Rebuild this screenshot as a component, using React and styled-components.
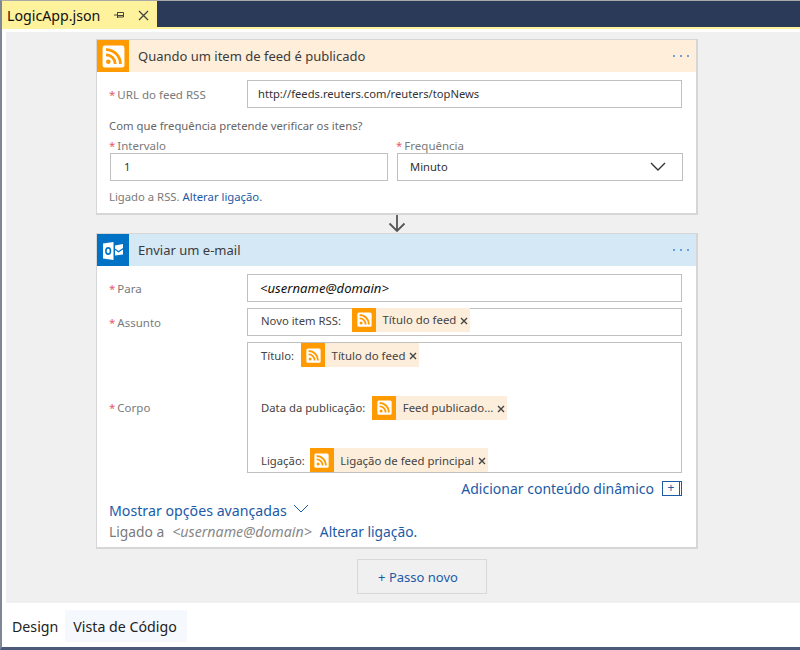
import styled, { createGlobalStyle } from "styled-components";

const Global = createGlobalStyle`
  html, body { margin: 0; padding: 0; background: #fff; }
  body { font-family: "Noto Sans", "Open Sans", sans-serif; color: #333; }
`;

const Frame = styled.div`
  width: 800px;
  height: 650px;
  box-sizing: border-box;
  display: flex;
  flex-direction: column;
  border-top: 1px solid #a9a9a9;
  border-left: 2px solid #7d8796;
  border-bottom: 3px solid #4a5a78;
  overflow: hidden;
`;

const TabBar = styled.div`
  height: 26px;
  flex: none;
  background: #2a3a58;
  display: flex;
`;

const FileTab = styled.div`
  width: 155px;
  background: #fff29d;
  display: flex;
  align-items: center;
  padding: 2px 0 0 5px;
  box-sizing: border-box;
  font-size: 14.2px;
  color: #111;
`;

const TabIcons = styled.div`
  display: flex;
  align-items: center;
  gap: 13px;
  margin-left: 14px;
`;

const YellowLine = styled.div`
  height: 2px;
  flex: none;
  background: #fff29d;
`;

const Canvas = styled.div`
  flex: none;
  height: 571px;
  margin: 3px 0 0 4px;
  box-sizing: border-box;
  background: #f0f0f0;
  padding: 7px 0 0 90px;
`;

const Card = styled.section`
  width: 602px;
  box-sizing: border-box;
  background: #fff;
  border: 1px solid #d6d6d6;
  border-right-width: 2px;
  border-bottom-width: 2px;
  height: ${(p) => p.$height}px;
`;

const CardHeader = styled.header`
  height: 32px;
  background: ${(p) => p.$bg};
  display: flex;
  align-items: center;
  font-size: 13px;
  color: #3b3b3b;
`;

const HeaderIcon = styled.div`
  width: 32px;
  height: 32px;
  flex: none;
  display: flex;
  align-items: center;
  justify-content: center;
  background: ${(p) => p.$bg};
  margin-right: 9px;
`;

const HeaderTitle = styled.span`
  flex: 1;
`;

const Dots = styled.div`
  display: flex;
  gap: 4.5px;
  margin-right: 7px;
`;

const Dot = styled.i`
  width: 2.5px;
  height: 2.5px;
  border-radius: 50%;
  background: #3f88da;
`;

const CardBody = styled.div`
  padding: 8px 14px 0 12px;
`;

const Row = styled.div`
  display: flex;
  align-items: center;
  margin-bottom: 6px;
`;

const Label = styled.label`
  width: 138px;
  flex: none;
  font-size: 11.5px;
  color: #7a7a7a;
`;

const Star = styled.span`
  color: #e8596b;
  margin-right: 2px;
`;

const Input = styled.div`
  box-sizing: border-box;
  flex: 1;
  height: 28px;
  border: 1.5px solid #c0c0c0;
  background: #fff;
  display: flex;
  align-items: center;
  padding: 0 0 1px ${(p) => p.$pl || 10}px;
  font-size: 11.2px;
  color: #333;
`;

const Address = styled.em`
  font-size: 13.1px;
  color: #111;
`;

const Question = styled.div`
  font-size: 11.3px;
  color: #666;
  margin-top: 9px;
  height: 17px;
  line-height: 17px;
`;

const Columns = styled.div`
  display: flex;
  gap: 9px;
  margin: 5px 0 0 1px;
`;

const Col = styled.div`
  width: ${(p) => p.$w}px;
  flex: none;
`;

const SmallLabel = styled.div`
  font-size: 11.5px;
  color: #7a7a7a;
  height: 14px;
  line-height: 14px;
  margin-left: -1px;
`;

const Select = styled(Input)`
  justify-content: space-between;
  padding-right: 16px;
  padding-bottom: 2px;
`;

const Note = styled.div`
  font-size: 11.3px;
  color: #7a7a7a;
  margin-top: 8px;
`;

const Link = styled.a`
  color: #1c5aa6;
`;

const Arrow = styled.div`
  width: 601px;
  height: 18px;
  display: flex;
  justify-content: center;
  align-items: flex-start;
`;

const Token = styled.span`
  display: inline-flex;
  align-items: center;
  height: 24px;
  background: #fdeedb;
  font-size: 11.4px;
  color: #444;
  padding-right: 2px;
  margin: ${(p) => p.$mt || 0}px 0 0 ${(p) => p.$ml || 0}px;
`;

const TokenIcon = styled.span`
  width: 24px;
  height: 24px;
  display: inline-flex;
  align-items: center;
  justify-content: center;
  background: #ff9a00;
  margin-right: 6.5px;
`;

const Remove = styled.svg`
  margin-left: 4px;
  margin-top: 2px;
`;

const Plain = styled.span`
  font-size: 11.3px;
  color: #444;
`;

const Body = styled.div`
  box-sizing: border-box;
  flex: 1;
  height: 131px;
  border: 1.5px solid #c0c0c0;
  padding: 0 0 0 13px;
  display: flex;
  flex-direction: column;
  justify-content: space-between;
`;

const Line = styled.div`
  display: flex;
  align-items: center;
  height: 24px;
`;

const SubjectInput = styled(Input)`
  align-items: flex-start;
  padding-left: 13px;
`;

const SubjectText = styled(Plain)`
  line-height: 24px;
`;

const Dynamic = styled.div`
  display: flex;
  justify-content: flex-end;
  align-items: center;
  gap: 8px;
  height: 20px;
  margin-top: -1px;
  font-size: 14px;
  color: #1c5aa6;
`;

const PlusBox = styled.span`
  width: 20px;
  height: 15px;
  box-sizing: border-box;
  border: 1.5px solid #1c5aa6;
  border-right-width: 3px;
  border-right-style: double;
  display: flex;
  align-items: center;
  justify-content: center;
  font-size: 12px;
  line-height: 12px;
`;

const Advanced = styled.div`
  display: flex;
  align-items: center;
  gap: 6px;
  font-size: 14.2px;
  color: #1c5aa6;
  height: 22px;
  margin-top: 1px;
`;

const AdvancedChevron = styled.svg`
  margin-top: -4px;
`;

const Connected = styled.div`
  display: flex;
  align-items: center;
  font-size: 13.8px;
  color: #7a7a7a;
  height: 20px;
`;

const Italic = styled.em`
  font-size: 14.2px;
  color: #888;
  margin: 0 8px 0 8px;
`;

const NewStep = styled.button`
  display: block;
  width: 130px;
  height: 35px;
  margin: 10px 0 0 261px;
  padding: 0 8px 0 0;
  background: #f0f0f0;
  border: 1.5px solid #d8d8d8;
  color: #1c5aa6;
  font-family: inherit;
  font-size: 13px;
`;

const BottomTabs = styled.div`
  flex: 1;
  display: flex;
  align-items: flex-start;
  padding: 7px 0 0 10px;
  font-size: 14.2px;
  color: #222;
`;

const ViewTab = styled.div`
  height: 32px;
  display: flex;
  align-items: center;
  padding: ${(p) => (p.$active ? "0 10px 0 8px" : "0 7px 0 0")};
  background: ${(p) => (p.$active ? "#f5f8fc" : "transparent")};
`;

const RssGlyph = ({ size = 15 }) => (
  <svg width={size} height={size} viewBox="0 0 20 20">
    <rect x="0.5" y="0.5" width="19" height="19" rx="2" fill="#fff" />
    <circle cx="5.5" cy="14.5" r="2" fill="#ff9a00" />
    <path d="M3.5 8.5a8 8 0 0 1 8 8" fill="none" stroke="#ff9a00" strokeWidth="2.4" />
    <path d="M3.5 4a12.5 12.5 0 0 1 12.5 12.5" fill="none" stroke="#ff9a00" strokeWidth="2.4" />
  </svg>
);

const OutlookGlyph = () => (
  <svg width="22" height="22" viewBox="0 0 22 22">
    <path d="M1 4.5 11.5 3v18L1 19.5z" fill="#fff" />
    <ellipse cx="6.2" cy="12" rx="2.3" ry="3.1" fill="none" stroke="#0072c6" strokeWidth="1.6" />
    <path d="M13 6.5 21 5v4l-4.5 3L13 9.5z" fill="#fff" />
    <path d="M13 11 16.5 13.5 21 10.5V15.5l-8 1z" fill="#fff" />
  </svg>
);

const Tag = ({ children, ml, mt }) => (
  <Token $ml={ml} $mt={mt}>
    <TokenIcon>
      <RssGlyph />
    </TokenIcon>
    {children}
    <Remove width="8" height="8" viewBox="0 0 8 8">
      <path d="M1 1l6 6M7 1 1 7" stroke="#444" strokeWidth="1.4" />
    </Remove>
  </Token>
);

export default function App() {
  return (
    <>
      <Global />
      <Frame>
        <TabBar>
          <FileTab>
            LogicApp.json
            <TabIcons>
              <svg width="11" height="10" viewBox="0 0 11 10">
                <path d="M0 5h3.5M3.5 2v6M3.5 2.5h6v4.5h-6M3.5 5.5h6" fill="none" stroke="#444" />
              </svg>
              <svg width="11" height="11" viewBox="0 0 11 11">
                <path d="M1 1l9 9M10 1l-9 9" stroke="#444" strokeWidth="1.3" />
              </svg>
            </TabIcons>
          </FileTab>
        </TabBar>
        <YellowLine />
        <Canvas>
          <Card $height={176}>
            <CardHeader $bg="#feeeda">
              <HeaderIcon $bg="#ff9a00">
                <RssGlyph size={23} />
              </HeaderIcon>
              <HeaderTitle>Quando um item de feed é publicado</HeaderTitle>
              <Dots>
                <Dot />
                <Dot />
                <Dot />
              </Dots>
            </CardHeader>
            <CardBody>
              <Row>
                <Label>
                  <Star>*</Star>URL do feed RSS
                </Label>
                <Input>http://feeds.reuters.com/reuters/topNews</Input>
              </Row>
              <Question>Com que frequência pretende verificar os itens?</Question>
              <Columns>
                <Col $w={278}>
                  <SmallLabel>
                    <Star>*</Star>Intervalo
                  </SmallLabel>
                  <Input $pl={13}>1</Input>
                </Col>
                <Col $w={286}>
                  <SmallLabel>
                    <Star>*</Star>Frequência
                  </SmallLabel>
                  <Select $pl={12}>
                    Minuto
                    <svg width="16" height="9" viewBox="0 0 16 9">
                      <path d="M1 1l7 7 7-7" fill="none" stroke="#333" strokeWidth="1.4" />
                    </svg>
                  </Select>
                </Col>
              </Columns>
              <Note>
                Ligado a RSS. <Link>Alterar ligação.</Link>
              </Note>
            </CardBody>
          </Card>
          <Arrow>
            <svg width="20" height="18" viewBox="0 0 20 18">
              <path d="M10 0v16M2.5 8.5 10 16l7.5-7.5" fill="none" stroke="#555" strokeWidth="1.8" />
            </svg>
          </Arrow>
          <Card $height={316}>
            <CardHeader $bg="#d5e8f5">
              <HeaderIcon $bg="#0072c6">
                <OutlookGlyph />
              </HeaderIcon>
              <HeaderTitle>Enviar um e-mail</HeaderTitle>
              <Dots>
                <Dot />
                <Dot />
                <Dot />
              </Dots>
            </CardHeader>
            <CardBody>
              <Row>
                <Label>
                  <Star>*</Star>Para
                </Label>
                <Input $pl={12}>
                  <Address>&lt;username@domain&gt;</Address>
                </Input>
              </Row>
              <Row>
                <Label>
                  <Star>*</Star>Assunto
                </Label>
                <SubjectInput>
                  <SubjectText>Novo item RSS:</SubjectText>
                  <Tag ml={11} mt={-1.5}>Título do feed</Tag>
                </SubjectInput>
              </Row>
              <Row>
                <Label>
                  <Star>*</Star>Corpo
                </Label>
                <Body>
                  <Line>
                    <Plain>Título:</Plain>
                    <Tag ml={7}>Título do feed</Tag>
                  </Line>
                  <Line>
                    <Plain>Data da publicação:</Plain>
                    <Tag ml={7}>Feed publicado...</Tag>
                  </Line>
                  <Line>
                    <Plain>Ligação:</Plain>
                    <Tag ml={5}>Ligação de feed principal</Tag>
                  </Line>
                </Body>
              </Row>
              <Dynamic>
                Adicionar conteúdo dinâmico
                <PlusBox>+</PlusBox>
              </Dynamic>
              <Advanced>
                Mostrar opções avançadas
                <AdvancedChevron width="16" height="9" viewBox="0 0 16 9">
                  <path d="M1 1l7 7 7-7" fill="none" stroke="#1c5aa6" />
                </AdvancedChevron>
              </Advanced>
              <Connected>
                Ligado a <Italic>&lt;username@domain&gt;</Italic>
                <Link>Alterar ligação.</Link>
              </Connected>
            </CardBody>
          </Card>
          <NewStep>+ Passo novo</NewStep>
        </Canvas>
        <BottomTabs>
          <ViewTab>Design</ViewTab>
          <ViewTab $active>Vista de Código</ViewTab>
        </BottomTabs>
      </Frame>
    </>
  );
}
